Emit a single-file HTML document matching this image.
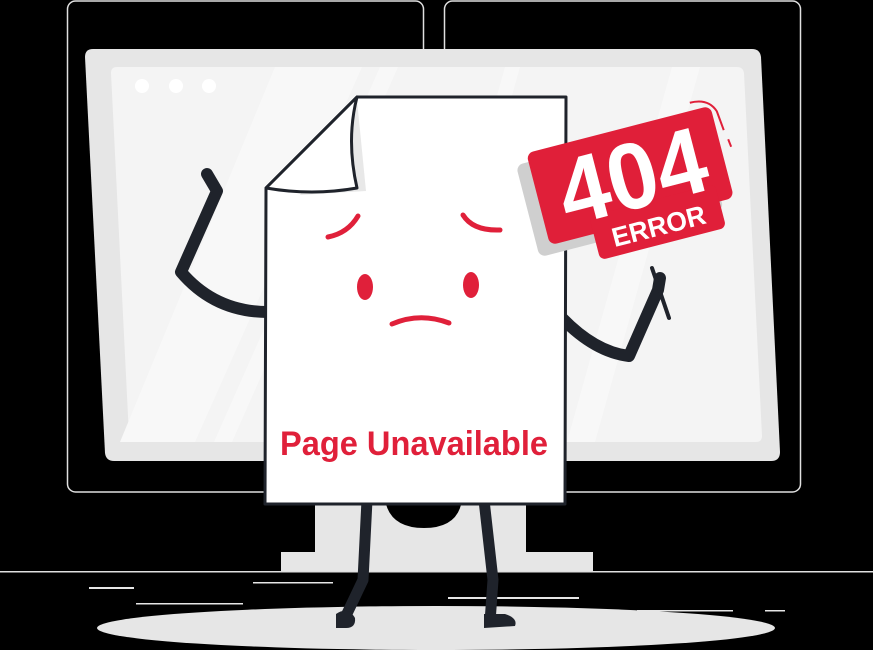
<!DOCTYPE html>
<html><head><meta charset="utf-8"><style>
html,body{margin:0;padding:0;background:#000;width:873px;height:650px;overflow:hidden}
svg{display:block}
</style></head><body>
<svg width="873" height="650" viewBox="0 0 873 650" xmlns="http://www.w3.org/2000/svg">
<rect width="873" height="650" fill="#000"/>
<rect x="67.5" y="1" width="356" height="491" rx="8" fill="none" stroke="#e0e0e0" stroke-width="1.5"/>
<rect x="444.5" y="1" width="356" height="491" rx="8" fill="none" stroke="#e0e0e0" stroke-width="1.5"/>
<path d="M315 500 H526 V552 H593 V572 H281 V552 H315 Z" fill="#e6e6e6"/>
<path d="M385 500 Q390 528 424 528 Q458 528 462 500 Z" fill="#000"/>
<path d="M93 49 H752 Q760 49 761 57 L780 452 Q780 461 771 461 H114 Q106 461 105 453 L85 57 Q85 49 93 49 Z" fill="#e6e6e6"/>
<path d="M117 67 H737 Q743 67 744 73 L762 436 Q762 442 756 442 H135 Q129 442 129 436 L111 73 Q111 67 117 67 Z" fill="#f4f4f4"/>
<path d="M275 67 H362 L195 442 H120 Z" fill="#f8f8f8"/>
<path d="M380 67 H398 L232 442 H214 Z" fill="#f8f8f8"/>
<path d="M672 67 H700 L595 442 H567 Z" fill="#f8f8f8"/>
<path d="M505 67 H520 L415 442 H400 Z" fill="#f8f8f8"/>
<circle cx="142" cy="86" r="7" fill="#fff"/>
<circle cx="176" cy="86" r="7" fill="#fff"/>
<circle cx="209" cy="86" r="7" fill="#fff"/>
<rect x="0" y="571" width="873" height="1.5" fill="#e0e0e0"/>
<g fill="#e6e6e6">
<rect x="89" y="587" width="45" height="2"/>
<rect x="253" y="582" width="80" height="1.5"/>
<rect x="136" y="603" width="107" height="1.5"/>
<rect x="448" y="597" width="131" height="2"/>
<rect x="637" y="610" width="96" height="1.5"/>
<rect x="765" y="610" width="20" height="1.5"/>
</g>
<ellipse cx="436" cy="628" rx="339" ry="22" fill="#e6e6e6"/>
<g fill="none" stroke="#1f232b" stroke-width="11" stroke-linecap="round" stroke-linejoin="round">
<path d="M367 500 L363 580 L343 622"/>
<path d="M484 500 L493 580 L490 622"/>
</g>
<path d="M336 614 Q348 606 355 618 Q356 628 346 628 L336 628 Z" fill="#1f232b"/>
<path d="M484 614 L505 614 Q518 618 515 626 L484 628 Z" fill="#1f232b"/>
<g fill="none" stroke="#1f232b" stroke-width="12" stroke-linecap="round" stroke-linejoin="round">
<path d="M268 312 Q215 312 181 272 L217 191 L207 174"/>
<path d="M562 318 Q595 352 629 356 L658 290 L660 278"/>
</g>
<line x1="652" y1="268" x2="669" y2="318" stroke="#1f232b" stroke-width="4" stroke-linecap="round"/>
<path d="M357 97 H566 L565 504 H265 L266 188 Z" fill="#fff" stroke="#1f232b" stroke-width="3" stroke-linejoin="round"/>
<path d="M357 100 L366 191 L300 195 Z" fill="#d8d8d8" opacity="0.6"/>
<path d="M357 97 Q346 140 357 188 Q312 196 266 188 Z" fill="#fff" stroke="#1f232b" stroke-width="3" stroke-linejoin="round"/>
<g fill="none" stroke="#e0203a" stroke-width="5" stroke-linecap="round">
<path d="M328 237 Q348 233 358 216"/>
<path d="M463 215 Q473 231 500 230"/>
<path d="M392 324 Q420 312 449 323"/>
</g>
<ellipse cx="365" cy="287" rx="8" ry="13" fill="#e0203a"/>
<ellipse cx="471" cy="285" rx="8" ry="13" fill="#e0203a"/>
<text x="280" y="455" font-family="'Liberation Sans Narrow','Liberation Sans',sans-serif" font-weight="bold" font-size="34" fill="#e0203a" textLength="268" lengthAdjust="spacingAndGlyphs">Page Unavailable</text>
<g transform="translate(630,175) rotate(-14.5)">
<rect x="-108" y="-38" width="190" height="95" rx="7" fill="#cfcfcf"/>
<rect x="-95" y="-47" width="190" height="95" rx="7" fill="#e01f39"/>
<rect x="-50" y="30" width="130" height="45" rx="6" fill="#e01f39"/>
<path d="M76 -55 Q95 -55 100 -40 L102 -20" fill="none" stroke="#e01f39" stroke-width="2"/>
<path d="M104 -10 L105 -2" fill="none" stroke="#e01f39" stroke-width="2"/>
<text x="2" y="34" text-anchor="middle" font-family="'Liberation Sans',sans-serif" font-weight="bold" font-size="94" fill="#fff" textLength="150" lengthAdjust="spacingAndGlyphs">404</text>
<text x="15" y="66" text-anchor="middle" font-family="'Liberation Sans',sans-serif" font-weight="bold" font-size="27" fill="#fff" textLength="96" lengthAdjust="spacingAndGlyphs">ERROR</text>
</g>
</svg>
</body></html>
